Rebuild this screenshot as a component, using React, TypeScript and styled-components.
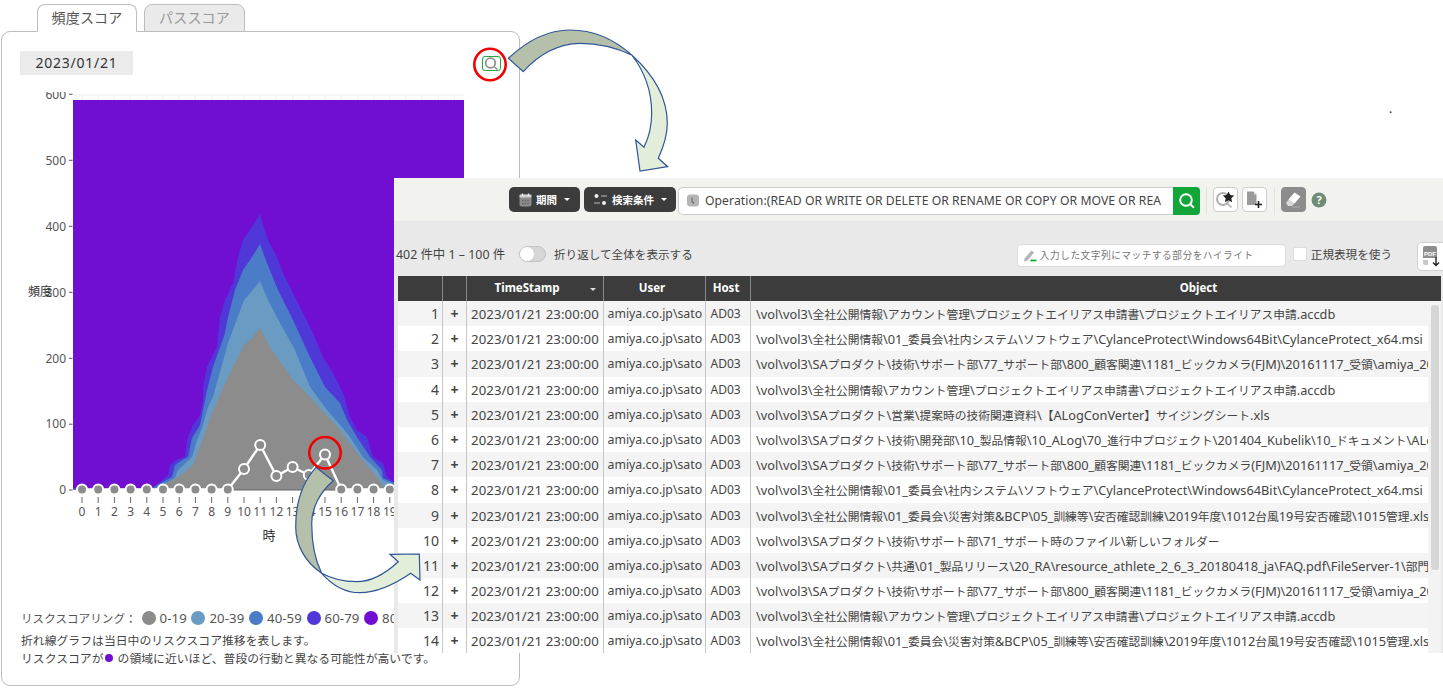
import React from 'react';
import styled, { createGlobalStyle } from 'styled-components';

const Global = createGlobalStyle`
  html, body { margin: 0; padding: 0; background: #fff; }
  body { font-family: "Noto Sans", "Noto Sans CJK JP", sans-serif; color: #444; }
`;

const Stage = styled.div`
  position: relative;
  width: 1443px;
  height: 688px;
  overflow: hidden;
`;

const LeftColumn = styled.section`
  width: 521px;
  padding: 4px 0 0 1px;
  box-sizing: border-box;
`;

const TabRow = styled.div`
  display: flex;
  gap: 7px;
  padding-left: 36px;
  position: relative;
  z-index: 1;
  margin-bottom: -1px;
`;

const Tab = styled.div<{ $active?: boolean }>`
  width: ${p => (p.$active ? 100 : 101)}px;
  height: 28px;
  box-sizing: border-box;
  border: 1px solid #bdbdbd;
  border-bottom: ${p => (p.$active ? '1px solid #fff' : '1px solid #bdbdbd')};
  border-radius: 8px 8px 0 0;
  background: ${p => (p.$active ? '#fff' : '#eaeaea')};
  color: ${p => (p.$active ? '#555' : '#999')};
  font-size: 14px;
  letter-spacing: 0.2px;
  line-height: 26px;
  text-align: center;
`;

const Card = styled.div`
  width: 519px;
  height: 655px;
  box-sizing: border-box;
  border: 1px solid #bdbdbd;
  border-radius: 9px;
  padding-top: 19px;
`;

const CardHeader = styled.div`
  display: flex;
  justify-content: space-between;
  align-items: center;
  height: 24px;
  padding: 0 18px 0 18px;
`;

const DateBox = styled.div`
  width: 113px;
  height: 24px;
  background: #ebebeb;
  color: #333;
  font-size: 14px;
  letter-spacing: 0.75px;
  line-height: 24px;
  text-align: center;
`;

const ZoomButton = styled.div`
  width: 19px;
  height: 15px;
  box-sizing: border-box;
  border: 1px solid #1fa83c;
  border-radius: 3px;
  display: flex;
  align-items: center;
  justify-content: center;
`;

const ChartSvg = styled.svg`
  display: block;
  margin-top: 17px;
  width: 500px;
  height: 464px;
  font-family: "Noto Sans", "Noto Sans CJK JP", sans-serif;
`;

const Legend = styled.div`
  display: flex;
  align-items: center;
  margin: 52px 0 0 19px;
  height: 20px;
  font-size: 11.6px;
  color: #555;
  white-space: nowrap;
`;

const LegendTitle = styled.span`
  margin-right: 5px;
`;

const LegendItem = styled.span`
  display: inline-flex;
  align-items: center;
  gap: 4px;
  margin-right: 4.6px;
  font-size: 13.2px;
  letter-spacing: 0.1px;
`;

const Swatch = styled.i<{ $c: string; $s?: number }>`
  display: inline-block;
  flex: none;
  width: ${p => p.$s ?? 14}px;
  height: ${p => p.$s ?? 14}px;
  border-radius: 50%;
  background: ${p => p.$c};
`;

const Notes = styled.div`
  margin: 3px 0 0 19px;
  font-size: 11.85px;
  line-height: 18px;
  color: #444;
  white-space: nowrap;
  p { margin: 0; }
  i { margin: 0 5px 0 1px; vertical-align: 1px; }
`;

const Window = styled.section`
  position: absolute;
  left: 394px;
  top: 178px;
  width: 1049px;
  height: 475px;
  overflow: hidden;
  background: #e9e9e9;
  display: flex;
  flex-direction: column;
`;

const Toolbar = styled.div`
  flex: none;
  height: 43px;
  box-sizing: border-box;
  background: #f2f3ef;
  padding: 9px 0 0 115px;
  display: flex;
  align-items: flex-start;
`;

const DarkButton = styled.div<{ $w: number }>`
  width: ${p => p.$w}px;
  height: 25px;
  margin-right: 4px;
  background: #3c3c3c;
  border-radius: 5px;
  color: #fff;
  display: flex;
  align-items: center;
  justify-content: center;
  gap: 4px;
  font-size: 10.5px;
  font-weight: 700;
  &::after {
    content: '';
    margin-left: 3px;
    border: 3px solid transparent;
    border-top: 3px solid #fff;
    border-bottom: 0;
  }
`;

const SearchBox = styled.div`
  width: 495px;
  height: 28px;
  margin-left: -2px;
  box-sizing: border-box;
  border: 1px solid #ccc;
  border-right: 0;
  border-radius: 5px 0 0 5px;
  background: #fff;
  display: flex;
  align-items: center;
  padding: 0 12px 2px 8px;
  gap: 6px;
  font-size: 12.2px;
  letter-spacing: 0.05px;
  color: #444;
  span { overflow: hidden; white-space: nowrap; }
`;

const SearchGo = styled.div`
  width: 27px;
  height: 28px;
  margin-right: 6px;
  background: #12a537;
  border-radius: 0 4px 4px 0;
  display: flex;
  align-items: center;
  justify-content: center;
`;

const ToolSep = styled.div`
  width: 1px;
  height: 28px;
  background: #e2e2de;
  margin-right: 6px;
`;

const IconButton = styled.div<{ $dark?: boolean }>`
  width: 25px;
  height: 25px;
  box-sizing: border-box;
  margin-right: 4px;
  border: 1px solid ${p => (p.$dark ? '#8c8c8c' : '#ccc')};
  border-radius: 4px;
  background: ${p => (p.$dark ? '#8c8c8c' : '#fff')};
  display: flex;
  align-items: center;
  justify-content: center;
  & + ${() => ToolSep} { margin-left: 3px; }
`;

const HelpIcon = styled.svg`
  margin: 5px 0 0 1px;
`;

const InfoRow = styled.div`
  flex: none;
  height: 55px;
  box-sizing: border-box;
  padding: 11px 0 0 2px;
  display: flex;
  align-items: center;
  font-size: 11.6px;
  color: #444;
  white-space: nowrap;
`;

const CountText = styled.span`
  width: 123px;
  font-size: 12.4px;
`;

const ToggleTrack = styled.div`
  width: 27px;
  height: 16px;
  box-sizing: border-box;
  border: 1px solid #c4c4c4;
  border-radius: 8px;
  background: #d6d6d6;
  margin-right: 8px;
  position: relative;
  &::before {
    content: '';
    position: absolute;
    left: 0;
    top: 0;
    width: 14px;
    height: 14px;
    border-radius: 50%;
    background: #fff;
  }
`;

const HighlightBox = styled.div`
  margin: 2px 0 0 auto;
  width: 269px;
  height: 23px;
  box-sizing: border-box;
  border: 1px solid #dcdcdc;
  border-radius: 4px;
  background: #fff;
  display: flex;
  align-items: center;
  padding-left: 5px;
  gap: 3px;
  font-size: 9.7px;
  letter-spacing: 0.5px;
  color: #777;
`;

const CheckBox = styled.div`
  width: 12px;
  height: 12px;
  margin: 0 4px 0 7px;
  border: 1px solid #ddd;
  border-radius: 2px;
  background: #fff;
`;

const PdfButton = styled.div`
  width: 33px;
  height: 29px;
  box-sizing: border-box;
  margin: 4px -7px 0 25px;
  flex: none;
  border: 1px solid #d0d0d0;
  border-radius: 5px;
  background: #fff;
  display: flex;
  align-items: center;
  padding-left: 4px;
`;

const TableWrap = styled.div`
  position: relative;
  margin-left: 4px;
  width: 1043px;
  background: #fff;
  color: #444;
`;

const columns = '45px 24px 137px 102px 45px 690px';

const HeadRow = styled.div`
  display: grid;
  grid-template-columns: ${columns};
  height: 25px;
  background: #3c3c3c;
`;

const Th = styled.div<{ $shift?: number }>`
  position: relative;
  box-sizing: border-box;
  padding: 0 ${p => p.$shift ?? 0}px 0 0;
  color: #fff;
  font-size: 11.5px;
  font-weight: 700;
  line-height: 24px;
  text-align: center;
  border-right: 1px solid #8a8a8a;
  &:last-child { border-right: 0; padding: 0 0 0 ${p => (p.$shift ?? 0)}px; }
`;

const SortCaret = styled.i`
  position: absolute;
  right: 7px;
  top: 12px;
  border: 3px solid transparent;
  border-top: 3px solid #ddd;
  border-bottom: 0;
`;

const Row = styled.div`
  display: grid;
  grid-template-columns: ${columns};
  height: 25.2px;
  align-items: stretch;
  &:nth-child(even) { background: #f4f4f4; }
  &:nth-child(odd) { background: #fff; }
`;

const Cell = styled.div`
  box-sizing: border-box;
  white-space: nowrap;
  overflow: hidden;
  border-right: 1px solid #c6c6c6;
  line-height: 26.5px;
`;

const NumCell = styled(Cell)`
  padding-right: 3px;
  text-align: right;
  font-size: 14px;
  line-height: 25px;
`;

const PlusCell = styled(Cell)`
  text-align: center;
  font-size: 14px;
  font-weight: 700;
`;

const DateCell = styled(Cell)`
  padding-left: 4px;
  font-size: 13.2px;
  letter-spacing: 0.1px;
`;

const UserCell = styled(Cell)`
  padding-left: 3.5px;
  font-size: 12.3px;
`;

const HostCell = styled(Cell)`
  padding-left: 4.5px;
  font-size: 12px;
`;

const ObjectCell = styled(Cell)`
  padding-left: 5px;
  border-right: 0;
  font-size: 12.75px;
`;

const CjkRun = styled.span`
  font-size: 11.75px;
`;

const ObjectClip = styled.div`
  width: 672px;
  overflow: hidden;
`;

const Scroll = styled.div`
  position: absolute;
  top: 25px;
  right: 0;
  bottom: 0;
  width: 13px;
  background: #f3f3f3;
  &::before {
    content: '';
    position: absolute;
    left: 3px;
    top: 4px;
    width: 8px;
    height: 265px;
    border-radius: 3px;
    background: #d6d6d6;
  }
`;

const Speck = styled.span`
  position: absolute;
  left: 1389px;
  top: 100px;
  font-size: 12px;
  color: #222;
`;

const Overlay = styled.svg`
  position: absolute;
  left: 0;
  top: 0;
  width: 1443px;
  height: 688px;
  pointer-events: none;
`;

const X0 = 82;
const DX = 16.2;
const hx = (h: number) => X0 + DX * h;

type P = [number, number];
const poly = (a: P[]) => a.map(([x, y]) => `${x},${y}`).join(' ');

const areaIndigo: P[] = [[147, 490], [155, 487], [160, 482], [168, 475], [170, 465], [176, 460], [185, 457], [187, 440], [193, 425], [200, 415], [203, 400], [203, 387], [207, 367], [217, 347], [220, 317], [225, 300], [233, 283], [238, 257], [243, 240], [252, 227], [260, 214], [264, 228], [268, 240], [277, 257], [283, 273], [293, 293], [300, 307], [313, 333], [323, 357], [333, 373], [343, 393], [350, 417], [357, 430], [367, 437], [373, 457], [383, 463], [387, 477], [394, 482], [404, 490]];
const areaBlue: P[] = [[150, 490], [157, 485], [172, 477], [175, 465], [182, 460], [188, 457], [192, 438], [200, 425], [204, 405], [207, 390], [213, 367], [225, 333], [228, 317], [235, 290], [243, 270], [252, 257], [260, 244], [267, 263], [278, 290], [293, 320], [310, 357], [325, 387], [340, 403], [347, 420], [357, 437], [370, 457], [382, 470], [383, 478], [394, 483], [404, 490]];
const areaLight: P[] = [[153, 490], [158, 487], [175, 478], [178, 470], [192, 457], [197, 440], [202, 428], [208, 407], [213, 397], [228, 343], [244, 300], [252, 291], [260, 281], [268, 300], [280, 323], [295, 350], [310, 387], [327, 410], [342, 427], [350, 437], [363, 457], [377, 470], [383, 480], [394, 485], [404, 490]];
const areaGray: P[] = [[158, 490], [163, 485], [177, 478], [193, 465], [200, 447], [212, 413], [228, 377], [244, 345], [252, 338], [260, 328], [270, 347], [293, 380], [310, 397], [340, 430], [357, 453], [377, 477], [385, 490]];

const lineValues: number[] = [489.5, 489.5, 489.5, 489.5, 489.5, 489.5, 489.5, 489.5, 489.5, 489.5, 469, 445, 476, 467, 475, 454.6, 489.5, 489.5, 489.5, 489.5, 489.5, 489.5, 489.5, 489.5];
const hours = Array.from({ length: 24 }, (_, i) => i);
const yTicks = [[600, 94.3], [500, 160.3], [400, 226.3], [300, 292.3], [200, 358.3], [100, 424.2], [0, 490]];

function Chart() {
  return (
    <ChartSvg viewBox="2 92 500 464">
      <line x1={73} x2={464} y1={95} y2={95} stroke="#eee" />
      {hours.map(h => <line key={h} x1={hx(h)} x2={hx(h)} y1={95} y2={100} stroke="#eee" />)}
      <rect x={73} y={100} width={391} height={390} fill="#700fd2" />
      <polygon points="73,490 73,488.5 150,488.5 150,490" fill="#4a7cc7" />
      <polygon points={poly(areaIndigo)} fill="#4f37d8" />
      <polygon points={poly(areaBlue)} fill="#4a7cc7" />
      <polygon points={poly(areaLight)} fill="#6a9bc3" />
      <polygon points={poly(areaGray)} fill="#8c8c8c" />
      <line x1={hx(9)} x2={hx(16)} y1={490} y2={490} stroke="#666" strokeWidth={1} />
      {yTicks.map(([v, y]) => (
        <g key={v}>
          <text x={66} y={y + 4.2} textAnchor="end" fontSize={12} fill="#555">{v}</text>
          <line x1={69} x2={72.5} y1={y} y2={y} stroke="#555" />
        </g>
      ))}
      <text x={40} y={296} textAnchor="middle" fontSize={12} fill="#333">頻度</text>
      {hours.map(h => (
        <g key={h}>
          <line x1={hx(h)} x2={hx(h)} y1={497} y2={503} stroke="#666" />
          <text x={hx(h)} y={516} textAnchor="middle" fontSize={12} fill="#555">{h}</text>
        </g>
      ))}
      <text x={269} y={540} textAnchor="middle" fontSize={13} fill="#333">時</text>
      <polyline points={lineValues.map((y, h) => `${hx(h).toFixed(1)},${y}`).join(' ')} fill="none" stroke="#fff" strokeWidth={2.4} />
      {lineValues.map((y, h) => <circle key={h} cx={hx(h)} cy={y} r={5} fill="#8c8c8c" stroke="#fff" strokeWidth={2} />)}
    </ChartSvg>
  );
}

const ROW_A = '\\vol\\vol3\\全社公開情報\\アカウント管理\\プロジェクトエイリアス申請書\\プロジェクトエイリアス申請.accdb';
const ROW_B = '\\vol\\vol3\\全社公開情報\\01_委員会\\社内システム\\ソフトウェア\\CylanceProtect\\Windows64Bit\\CylanceProtect_x64.msi';
const ROW_C = '\\vol\\vol3\\SAプロダクト\\技術\\サポート部\\77_サポート部\\800_顧客関連\\1181_ビックカメラ(FJM)\\20161117_受領\\amiya_20161117.zip';
const ROW_D = '\\vol\\vol3\\全社公開情報\\01_委員会\\災害対策&BCP\\05_訓練等\\安否確認訓練\\2019年度\\1012台風19号安否確認\\1015管理.xlsx';
const objects = [
  ROW_A, ROW_B, ROW_C, ROW_A,
  '\\vol\\vol3\\SAプロダクト\\営業\\提案時の技術関連資料\\【ALogConVerter】サイジングシート.xls',
  '\\vol\\vol3\\SAプロダクト\\技術\\開発部\\10_製品情報\\10_ALog\\70_進行中プロジェクト\\201404_Kubelik\\10_ドキュメント\\ALog.docx',
  ROW_C, ROW_B, ROW_D,
  '\\vol\\vol3\\SAプロダクト\\技術\\サポート部\\71_サポート時のファイル\\新しいフォルダー',
  '\\vol\\vol3\\SAプロダクト\\共通\\01_製品リリース\\20_RA\\resource_athlete_2_6_3_20180418_ja\\FAQ.pdf\\FileServer-1\\部門.pdf',
  ROW_C, ROW_A, ROW_D,
];

const textRuns = (s: string) =>
  s.split(/([^\x00-\x7f]+)/).map((r, i) => (i % 2 ? <CjkRun key={i}>{r}</CjkRun> : r));

const legend: [string, string][] = [['#8c8c8c', '0-19'], ['#6a9bc3', '20-39'], ['#4a7cc7', '40-59'], ['#4f37d8', '60-79'], ['#700fd2', '80-100']];

export default function App() {
  return (
    <Stage>
      <Global />
      <LeftColumn>
        <TabRow>
          <Tab $active>頻度スコア</Tab>
          <Tab>パススコア</Tab>
        </TabRow>
        <Card>
          <CardHeader>
            <DateBox>2023/01/21</DateBox>
            <ZoomButton>
              <svg width="16" height="13" viewBox="0 0 16 13">
                <circle cx="6.5" cy="6" r="4.8" fill="none" stroke="#909090" strokeWidth="1.8" />
                <path d="M10.5 10l3 2.4" stroke="#909090" strokeWidth="1.5" />
              </svg>
            </ZoomButton>
          </CardHeader>
          <Chart />
          <Legend>
            <LegendTitle>リスクスコアリング：</LegendTitle>
            {legend.map(([c, t]) => (
              <LegendItem key={t}><Swatch $c={c} />{t}</LegendItem>
            ))}
          </Legend>
          <Notes>
            <p>折れ線グラフは当日中のリスクスコア推移を表します。</p>
            <p>リスクスコアが<Swatch $c="#700fd2" $s={8} />の領域に近いほど、普段の行動と異なる可能性が高いです。</p>
          </Notes>
        </Card>
      </LeftColumn>

      <Window>
        <Toolbar>
          <DarkButton $w={71}>
            <svg width="13" height="14" viewBox="0 0 13 14">
              <rect x="0.5" y="1.5" width="12" height="12" rx="2" fill="#8c8c8c" />
              <rect x="0.5" y="1.5" width="12" height="3" rx="1" fill="#cfcfcf" />
              <path d="M3.5 0.5v2.5M9.5 0.5v2.5" stroke="#eee" strokeWidth="1.3" />
              <path d="M3 7.5h7M3 10.5h7" stroke="#5f5f5f" strokeWidth="1.4" strokeDasharray="1.4 1.2" />
            </svg>
            期間
          </DarkButton>
          <DarkButton $w={92}>
            <svg width="15" height="13" viewBox="0 0 15 13">
              <circle cx="3.5" cy="3" r="2" fill="#eee" />
              <path d="M8 3h6" stroke="#999" strokeWidth="1.4" />
              <circle cx="11" cy="10" r="2" fill="#eee" />
              <path d="M1 10h6" stroke="#999" strokeWidth="1.4" />
            </svg>
            検索条件
          </DarkButton>
          <SearchBox>
            <svg width="12" height="13" viewBox="0 0 12 13" style={{ flex: 'none' }}>
              <rect x="0" y="0.5" width="12" height="12" rx="3" fill="#b5b5b5" />
              <path d="M5 3.5v4l2 2" fill="none" stroke="#666" strokeWidth="1.1" />
            </svg>
            <span>Operation:(READ OR WRITE OR DELETE OR RENAME OR COPY OR MOVE OR READ_CONTROL OR WRITE_DAC)</span>
          </SearchBox>
          <SearchGo>
            <svg width="18" height="18" viewBox="0 0 18 18">
              <circle cx="8" cy="8" r="5.8" fill="none" stroke="#fff" strokeWidth="2" />
              <path d="M12.3 12.3l3.6 3.4" stroke="#fff" strokeWidth="2" />
            </svg>
          </SearchGo>
          <ToolSep />
          <IconButton>
            <svg width="21" height="20" viewBox="0 0 21 20">
              <circle cx="8" cy="9" r="6" fill="none" stroke="#b0b0b0" strokeWidth="2" />
              <path d="M12.5 13.5l4 4" stroke="#b0b0b0" strokeWidth="1.6" />
              <path d="M13.5 1.5l1.8 3.6 3.9.5-2.9 2.7.8 3.9-3.6-2-3.6 2 .8-3.9-2.9-2.7 3.9-.5z" fill="#222" />
            </svg>
          </IconButton>
          <IconButton>
            <svg width="19" height="20" viewBox="0 0 19 20">
              <path d="M2 1.5h6.5l3 3V15H2z" fill="#9a9a9a" />
              <path d="M9 1.5l2.5 3H9z" fill="#ddd" />
              <path d="M13.5 11v7M10 14.5h7" stroke="#222" strokeWidth="1.6" />
            </svg>
          </IconButton>
          <ToolSep />
          <IconButton $dark>
            <svg width="21" height="20" viewBox="0 0 21 20">
              <path d="M11.5 2.5l6 4-6 7-6-4z" fill="#fff" />
              <path d="M5.5 9.5l6 4-2.5 2.5H5l-2-3z" fill="#d8d8d8" />
              <path d="M9 17h8" stroke="#a8a8a8" strokeWidth="1.2" />
            </svg>
          </IconButton>
          <HelpIcon width="16" height="16" viewBox="0 0 16 16">
            <circle cx="8" cy="8" r="7.5" fill="#6f8d76" />
            <text x="8" y="12" textAnchor="middle" fontSize="11" fontWeight="700" fill="#fff" fontFamily="Noto Sans">?</text>
          </HelpIcon>
        </Toolbar>

        <InfoRow>
          <CountText>402 件中 1 – 100 件</CountText>
          <ToggleTrack />
          折り返して全体を表示する
          <HighlightBox>
            <svg width="14" height="15" viewBox="0 0 14 15">
              <path d="M1.5 10.5l7-8 2.5 2-6.5 8-3.5 1z" fill="#b5b5b5" />
              <path d="M7.5 12.5h6" stroke="#14a538" strokeWidth="1.8" />
            </svg>
            入力した文字列にマッチする部分をハイライト
          </HighlightBox>
          <CheckBox />
          正規表現を使う
          <PdfButton>
            <svg width="20" height="22" viewBox="0 0 20 22">
              <path d="M1 3a2 2 0 0 1 2-2h10a2 2 0 0 1 2 2v10H1z" fill="#8f8f8f" />
              <path d="M1 15h5v5H3a2 2 0 0 1-2-2z" fill="#c9c9c9" />
              <text x="8" y="10.5" textAnchor="middle" fontSize="6" fontWeight="700" fill="#fff" fontFamily="Liberation Sans">PDF</text>
              <path d="M14 12v8M11 17.5l3 3 3-3" fill="none" stroke="#222" strokeWidth="1.4" />
            </svg>
          </PdfButton>
        </InfoRow>

        <TableWrap>
          <HeadRow>
            <Th /><Th />
            <Th $shift={16}>TimeStamp<SortCaret /></Th>
            <Th $shift={5}>User</Th>
            <Th $shift={4}>Host</Th>
            <Th $shift={205}>Object</Th>
          </HeadRow>
          {objects.map((o, i) => (
            <Row key={i}>
              <NumCell>{i + 1}</NumCell>
              <PlusCell>+</PlusCell>
              <DateCell>2023/01/21 23:00:00</DateCell>
              <UserCell>amiya.co.jp\sato</UserCell>
              <HostCell>AD03</HostCell>
              <ObjectCell><ObjectClip>{textRuns(o)}</ObjectClip></ObjectCell>
            </Row>
          ))}
          <Scroll />
        </TableWrap>
      </Window>

      <Speck>.</Speck>

      <Overlay viewBox="0 0 1443 688">
        <circle cx={490} cy={64.5} r={15.7} fill="none" stroke="#f00000" strokeWidth={2.6} />
        <circle cx={325} cy={452.7} r={15.7} fill="none" stroke="#f00000" strokeWidth={2.6} />
        <g stroke="#2f5597" strokeWidth={1.2} strokeLinejoin="miter">
          <path d="M631.7 55C655 76 667.3 100 667.3 123.3C667.3 136 663 148 658.3 158.3L667.7 166.7L640 171L635.7 140L644 147.3C650 135 651.7 124 651.7 113.3C651.7 92 645 72 631.7 55Z" fill="#e3eeda" />
          <path d="M508.3 58.3C530 38 552 30 570 30C595 30 615 40 631.7 55C615 47 598 43.3 580 43.3C558 43.3 538 55 523.3 71.7Z" fill="#b5c0ab" />
          <path d="M321.7 573.3C332 579 345 581.7 356.7 581.7C372 581.7 386 573 398.3 561.7L390 554.3L419.3 554L420 580L410.7 573.3C395 584 378 592.7 360 592.7C345 592.7 332 585 321.7 573.3Z" fill="#e3eeda" />
          <path d="M316 467.3C300 485 295.7 505 295.7 526.7C295.7 545 305 562 321.7 573.3C315 560 311.7 540 311.7 523.3C311.7 508 320 492 333.3 480.7Z" fill="#b5c0ab" />
        </g>
      </Overlay>
    </Stage>
  );
}
